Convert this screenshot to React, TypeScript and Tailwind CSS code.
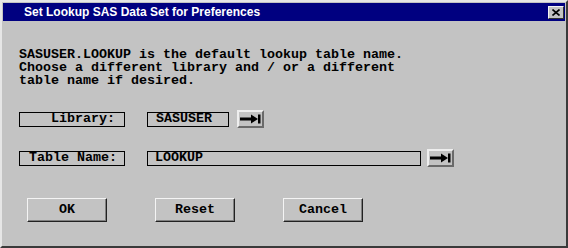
import React from "react";

// little "go to end" arrow used on the selector buttons
function ArrowIcon() {
  return (
    <svg width="22" height="10" viewBox="0 0 22 10" className="block">
      <rect x="0" y="3.5" width="12" height="3" fill="#000" />
      <polygon points="11,0.5 18,5 11,9.5" fill="#000" />
      <rect x="18" y="0.5" width="2.5" height="9" fill="#000" />
    </svg>
  );
}

function PickButton() {
  return (
    <button
      type="button"
      className="flex h-[18px] w-[27px] items-center justify-center border-2 border-t-[#eeeeee] border-l-[#eeeeee] border-r-[#6a6a6a] border-b-[#6a6a6a] bg-[#c3c3c3]"
    >
      <ArrowIcon />
    </button>
  );
}

function PushButton({ label }: { label: string }) {
  return (
    <button
      type="button"
      className="flex h-[24px] w-[80px] items-center justify-center border border-t-[#f4f4f4] border-l-[#f4f4f4] border-r-[#222] border-b-[#222] bg-[#c3c3c3] shadow-[inset_-1px_-1px_0_#808080] font-bold"
    >
      {label}
    </button>
  );
}

function App() {
  const mono = { fontFamily: '"Liberation Mono", "DejaVu Sans Mono", monospace' };

  return (
    <div className="h-[248px] w-[568px] overflow-hidden bg-[#c3c3c3]">
      <div className="flex h-full w-full flex-col border-2 border-t-[#e6e6e6] border-l-[#e6e6e6] border-r-[#3a3a3a] border-b-[#3a3a3a] p-px">
        {/* title bar */}
        <div className="flex h-[18px] items-center justify-between bg-[#000080] pl-[21px] pr-[1px]">
          <span
            className="text-[12px] font-bold leading-none text-white"
            style={{ fontFamily: '"Liberation Sans", Arial, sans-serif' }}
          >
            Set Lookup SAS Data Set for Preferences
          </span>
          <button
            type="button"
            className="flex h-[13px] w-[16px] items-center justify-center border border-t-[#f4f4f4] border-l-[#f4f4f4] border-r-[#303030] border-b-[#303030] bg-[#c3c3c3]"
          >
            <svg width="8" height="7" viewBox="0 0 8 7">
              <path d="M0.5 0.5 L7.5 6.5 M7.5 0.5 L0.5 6.5" stroke="#000" strokeWidth="1.6" />
            </svg>
          </button>
        </div>

        <div className="flex flex-col px-[16px] text-[13.33px] font-bold text-black" style={mono}>
          <div className="mt-[27px] flex flex-col">
            <div className="h-[13px] leading-[13px]">SASUSER.LOOKUP is the default lookup table name.</div>
            <div className="h-[13px] leading-[13px]">Choose a different library and / or a different</div>
            <div className="h-[13px] leading-[13px]">table name if desired.</div>
          </div>

          {/* library row */}
          <div className="mt-[23px] flex items-center">
            <div className="flex h-[15px] w-[106px] items-center border border-black pl-[31px] leading-none">
              Library:
            </div>
            <div className="ml-[22px] flex h-[15px] w-[82px] items-center border border-black pl-[8px] leading-none">
              SASUSER
            </div>
            <div className="ml-[8px]">
              <PickButton />
            </div>
          </div>

          {/* table row */}
          <div className="mt-[21px] flex items-center">
            <div className="flex h-[15px] w-[106px] items-center border border-black pl-[9px] leading-none">
              Table Name:
            </div>
            <div className="ml-[22px] flex h-[15px] w-[274px] items-center border border-black pl-[7px] leading-none">
              LOOKUP
            </div>
            <div className="ml-[6px]">
              <PickButton />
            </div>
          </div>

          {/* buttons */}
          <div className="mt-[31px] flex gap-[48px] pl-[8px]">
            <PushButton label="OK" />
            <PushButton label="Reset" />
            <PushButton label="Cancel" />
          </div>
        </div>
      </div>
    </div>
  );
}

export default App;
